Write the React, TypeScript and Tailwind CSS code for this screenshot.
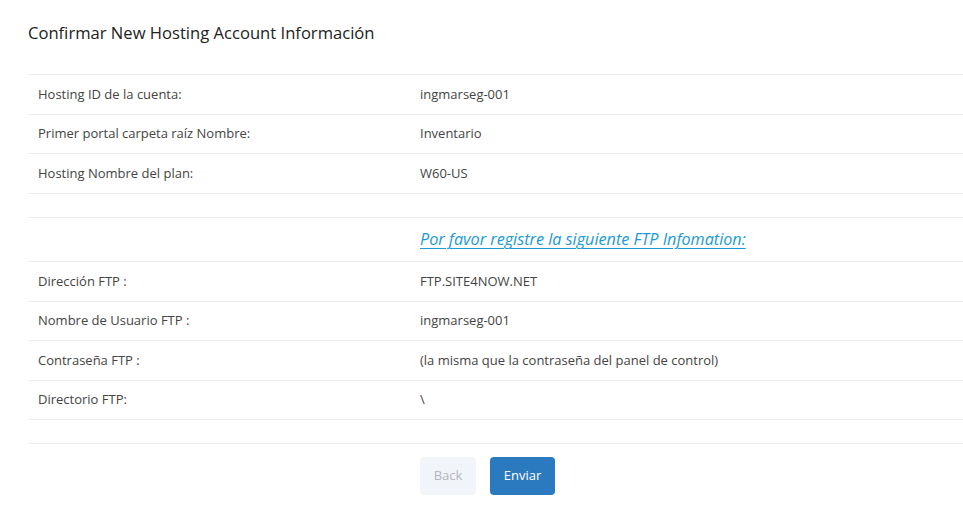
import React from 'react';

type Row = { label: string; value: string; h: string };

const accountRows: Row[] = [
  { label: 'Hosting ID de la cuenta:', value: 'ingmarseg-001', h: 'h-[40px]' },
  { label: 'Primer portal carpeta raíz Nombre:', value: 'Inventario', h: 'h-[39px]' },
  { label: 'Hosting Nombre del plan:', value: 'W60-US', h: 'h-[40px]' },
];

const ftpRows: Row[] = [
  { label: 'Dirección FTP :', value: 'FTP.SITE4NOW.NET', h: 'h-[40px]' },
  { label: 'Nombre de Usuario FTP :', value: 'ingmarseg-001', h: 'h-[39px]' },
  { label: 'Contraseña FTP :', value: '(la misma que la contraseña del panel de control)', h: 'h-[40px]' },
  { label: 'Directorio FTP:', value: '\\', h: 'h-[39px]' },
];

function InfoRow({ row }: { row: Row }) {
  return (
    <div className={`flex items-center border-t border-[#ebebeb] ${row.h}`}>
      <div className="w-[392px] shrink-0 pl-[10px]">{row.label}</div>
      <div>{row.value}</div>
    </div>
  );
}

export default function App() {
  return (
    <div
      className="min-h-[517px] bg-white pl-[28px] text-[13px] text-[#444]"
      style={{ fontFamily: '"Open Sans", "Liberation Sans", sans-serif' }}
    >
      <div className="h-[74px] pt-[22px]">
        <h2 className="text-[16.6px] leading-[22px] text-[#222]">
          Confirmar New Hosting Account Información
        </h2>
      </div>

      <div>
        {accountRows.map((r) => (
          <InfoRow key={r.label} row={r} />
        ))}
        <div className="h-[24px] border-t border-[#ebebeb]" />
        <div className="flex h-[44px] items-center border-t border-[#ebebeb]">
          <div className="w-[392px] shrink-0" />
          <a href="#" className="text-[16.2px] italic text-[#1a9ad6] underline underline-offset-[3px]">
            Por favor registre la siguiente FTP Infomation:
          </a>
        </div>
        {ftpRows.map((r) => (
          <InfoRow key={r.label} row={r} />
        ))}
        <div className="h-[24px] border-t border-[#ebebeb]" />
        <div className="border-t border-[#ebebeb]" />
      </div>

      <div className="flex gap-[14px] pl-[392px] pt-[13px]">
        <button
          disabled
          className="h-[38px] w-[56px] rounded-[4px] bg-[#f1f4f8] text-[13px] text-[#b3b7be]"
        >
          Back
        </button>
        <button className="h-[38px] w-[65px] rounded-[4px] bg-[#2b7abf] text-[13px] text-white">
          Enviar
        </button>
      </div>
    </div>
  );
}
